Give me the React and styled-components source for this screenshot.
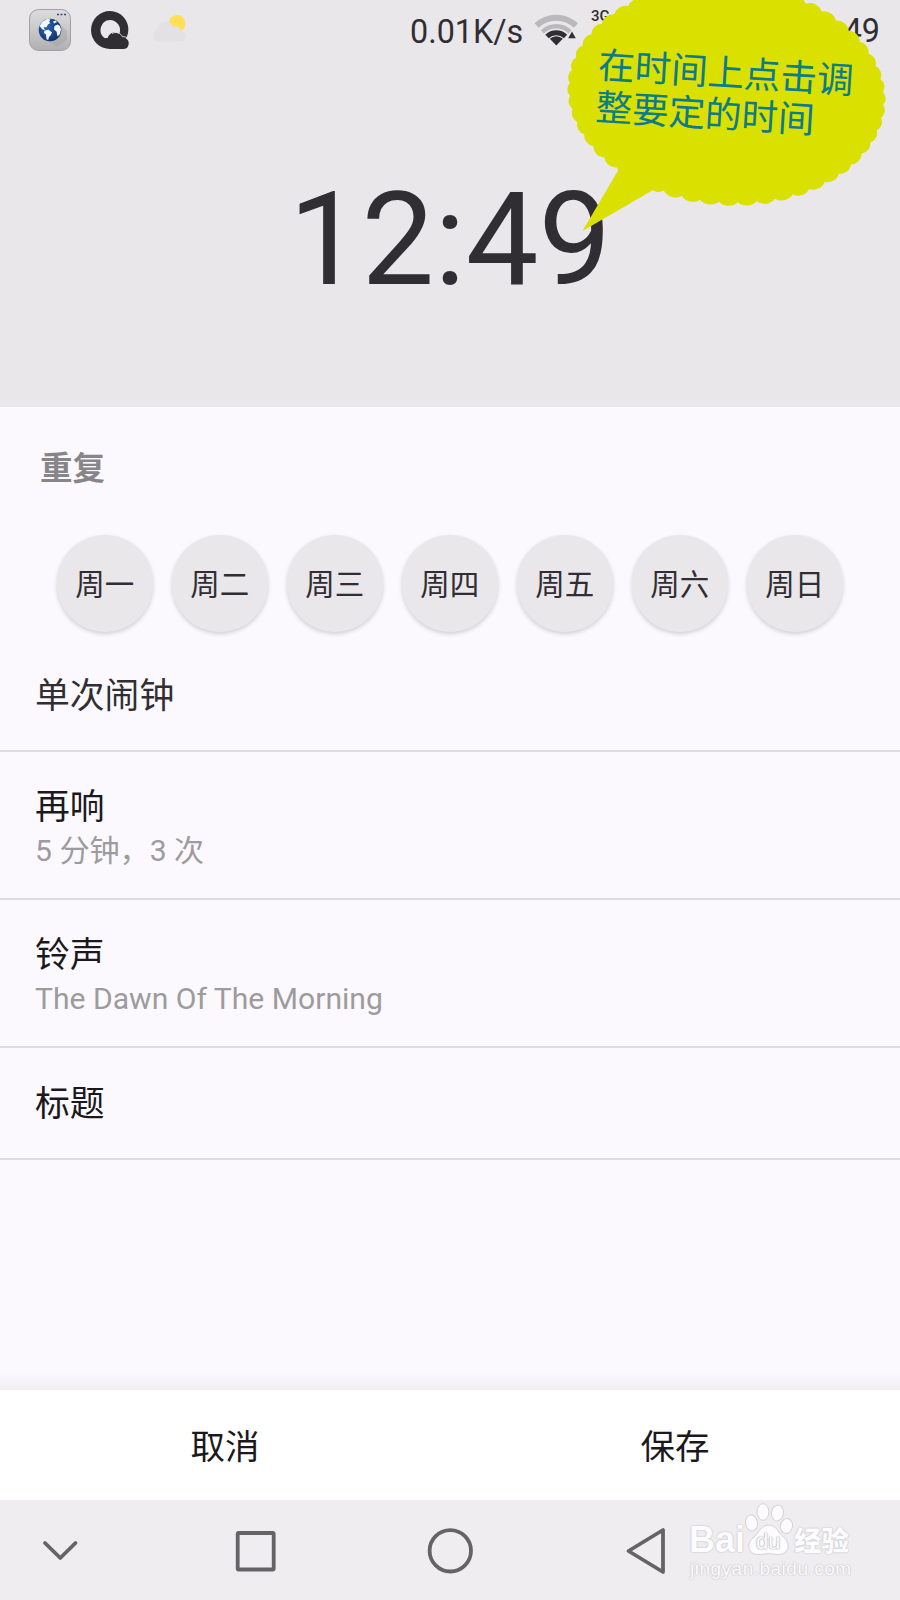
import React from 'react';
import styled, { createGlobalStyle } from 'styled-components';

const days = ['周一', '周二', '周三', '周四', '周五', '周六', '周日'];

// outline of the scalloped bubble: one small arc per step round a tilted ellipse
const scallops = (cx, cy, rx, ry, tilt, count) => {
    const points = [];
    for (let i = 0; i < count; i++) {
        const a = (i / count) * Math.PI * 2;
        const x = rx * Math.cos(a);
        const y = ry * Math.sin(a);
        points.push([
            cx + x * Math.cos(tilt) - y * Math.sin(tilt),
            cy + x * Math.sin(tilt) + y * Math.cos(tilt),
        ]);
    }
    let d = `M${points[0][0]} ${points[0][1]}`;
    for (let i = 1; i <= count; i++) {
        const [px, py] = points[i - 1];
        const [x, y] = points[i % count];
        const r = Math.hypot(x - px, y - py) * 0.72;
        d += `A${r} ${r} 0 0 1 ${x} ${y}`;
    }
    return d + 'Z';
};

const BrowserIcon = () => (
    <svg width="42" height="42" viewBox="0 0 42 42">
        <defs>
            <linearGradient id="metal" x1="0" y1="0" x2="0" y2="1">
                <stop offset="0" stopColor="#dcdcdd" />
                <stop offset="0.5" stopColor="#c9c9ca" />
                <stop offset="1" stopColor="#b0b0b2" />
            </linearGradient>
            <radialGradient id="ocean" cx="0.35" cy="0.4" r="0.7">
                <stop offset="0" stopColor="#2c68b4" />
                <stop offset="1" stopColor="#0d2b66" />
            </radialGradient>
        </defs>
        <rect x="0.5" y="0.5" width="41" height="41" rx="9" fill="url(#metal)" stroke="#a09fa3" />
        <path d="M29 13L38 22V31L28 38L13 29Z" fill="#98989b" opacity="0.35" />
        <path d="M28 5.5h2M31.5 5.5h2M35 5.5h2" stroke="#254b83" strokeWidth="1.6" />
        <circle cx="21" cy="21" r="11.3" fill="url(#ocean)" />
        <path d="M10.5 17l3-4.5 5-2.8 3 .8-1.5 2.5 1.5 1-2.5 1.5-1.5 2.5-3 .5 1.5 2.5-2.5-.5z" fill="#f4f7fb" />
        <path d="M15.5 21.5l4-.8 3.5 2.8-1.5 3-1.5 1.5-.8 3-1.7-.8-.5-4.7-2-1.5z" fill="#f4f7fb" />
        <path d="M25.5 17l3-1.5 2.5 1.5 1 3.5-1 4.5-2.5 2.5-1-5-2.5-2zM24 12.5l2.5-1 1.5 1.5-3 1.5z" fill="#f4f7fb" />
    </svg>
);

const QIcon = () => (
    <svg width="38" height="38" viewBox="0 0 38 38">
        <path
            fillRule="evenodd"
            d="M19 0a18.5 18.5 0 0 1 16 27.5C37.3 29 38 31 37.6 33.5c-.4 3-2.6 4.5-5.4 4.5H19A19 19 0 0 1 19 0zM19 9a10 10 0 0 0-5 18.3c1-.5 1.8-.5 2.7-.3C18 21.5 24 20 28.3 22.8A10 10 0 0 0 19 9z"
            fill="#302e32"
        />
        <path d="M21 22.5c3.5-2 8.5-1 10.5 3.3 1.5-.3 3 0 4.3 1" fill="none" stroke="#e9e7ea" strokeWidth="0.9" />
    </svg>
);

const WeatherIcon = () => (
    <svg width="35" height="29" viewBox="0 0 35 29">
        <circle cx="25" cy="9.5" r="8.5" fill="#ffdf57" />
        <path d="M6.5 27.5a6.5 6.5 0 0 1-1-12.5C6 10 9.5 7.5 13.5 7.5c4 0 6.5 2 7.7 5.5 5-1.5 7 1 8 4C35 17.5 34.5 27.5 28.5 27.5z" fill="#e3e1e4" />
    </svg>
);

const WifiIcon = () => (
    <svg width="46" height="34" viewBox="0 0 46 34">
        <g fill="none">
            <path d="M2.6 12.5a28.5 28.5 0 0 1 39.3 0" stroke="#bab8bb" strokeWidth="6" />
            <path d="M8.4 18.8a20 20 0 0 1 27.6 0" stroke="#bab8bb" strokeWidth="4.5" />
            <path d="M13 23.5a13.5 13.5 0 0 1 18.5 0" stroke="#302e32" strokeWidth="5" />
        </g>
        <path d="M22.3 32.5l-6.5-6.7a9.5 9.5 0 0 1 13 0z" fill="#302e32" />
        <path d="M38 18.5l3.8 6.7h-7.6z" fill="#302e32" />
    </svg>
);

const Bubble = () => (
    <BubbleWrapper>
        <svg width="340" height="240" viewBox="560 0 340 240">
            <path d={scallops(726.5, 94, 157, 108, 0.07, 52)} fill="#dae000" />
            <path d="M619 169L582.5 231L653 190L660 150Z" fill="#dae000" />
        </svg>
        <BubbleText>
            在时间上点击调
            <br />
            整要定的时间
        </BubbleText>
    </BubbleWrapper>
);

const Watermark = () => (
    <WatermarkWrapper>
        <Brand>
            <Bai>Bai</Bai>
            <Paw>
                <svg width="50" height="54" viewBox="0 0 50 54">
                    <g fill="#fcfbfd" stroke="#d4d2d5" strokeWidth="1">
                        <ellipse cx="7.5" cy="20" rx="6" ry="8" transform="rotate(-8 7.5 20)" />
                        <ellipse cx="19" cy="9" rx="6" ry="8.3" />
                        <ellipse cx="33.5" cy="10" rx="6" ry="8" transform="rotate(10 33.5 10)" />
                        <ellipse cx="42.5" cy="23" rx="6" ry="7.5" transform="rotate(12 42.5 23)" />
                        <path d="M24.5 22c8 0 9 7 15 12 8 7 5 17-4 17.5-5 .3-7-.8-11-.8s-6 1.100-11 .8C4 51 2 41 9 35c6-5 8-13 15.500-13z" />
                    </g>
                </svg>
                <Du>du</Du>
            </Paw>
            <BrandCn>经验</BrandCn>
        </Brand>
        <Site>jingyan.baidu.com</Site>
    </WatermarkWrapper>
);

const App = () => (
    <Screen>
        <GlobalStyle />
        <Header>
            <StatusBar>
                <BrowserIcon />
                <QIcon />
                <WeatherIcon />
                <Speed>0.01K/s</Speed>
                <WifiIcon />
                <Network>3G</Network>
                <Clock>12:49</Clock>
            </StatusBar>
            <Time>12:49</Time>
            <Bubble />
        </Header>
        <Content>
            <Repeat>
                <SectionTitle>重复</SectionTitle>
                <Days>
                    {days.map((day) => (
                        <Day key={day}>{day}</Day>
                    ))}
                </Days>
                <Label $soft>单次闹钟</Label>
            </Repeat>
            <Row $height={148} $offset={5}>
                <Label>再响</Label>
                <Value>5 分钟，3 次</Value>
            </Row>
            <Row $height={148} $offset={5}>
                <Label>铃声</Label>
                <Value>The Dawn Of The Morning</Value>
            </Row>
            <Row $height={112} $offset={2}>
                <Label>标题</Label>
            </Row>
        </Content>
        <Actions>
            <Action>取消</Action>
            <Action>保存</Action>
        </Actions>
        <NavBar>
            <svg width="900" height="100" viewBox="0 0 900 100" fill="none" stroke="#656366" strokeWidth="3.8" strokeLinejoin="round" strokeLinecap="round">
                <path d="M45 43l15.3 15L75.5 43" />
                <rect x="237.7" y="33" width="36" height="36.5" rx="1" />
                <circle cx="450.3" cy="50.8" r="20.7" />
                <path d="M663 30v42L628.5 51z" />
            </svg>
            <Watermark />
        </NavBar>
    </Screen>
);

const GlobalStyle = createGlobalStyle`
    body {
        margin: 0;
        background: #fbf9fd;
    }

    * {
        box-sizing: border-box;
    }`;

const Screen = styled.div`
    width: 900px;
    height: 1600px;
    display: flex;
    flex-direction: column;
    overflow: hidden;
    background: #fbf9fd;
    color: #1b191c;
    font-family: Roboto, 'Noto Sans CJK SC', sans-serif;
`;

const Header = styled.header`
    position: relative;
    height: 407px;
    flex: none;
    background: #e9e7ea;
`;

const StatusBar = styled.div`
    display: flex;
    align-items: center;
    height: 60px;
    padding: 0 20px 0 29px;

    svg {
        flex: none;
    }

    svg + svg {
        margin-left: 20px;
    }

    svg:nth-of-type(3) {
        margin: 0 0 4px 23px;
    }

    svg:nth-of-type(4) {
        margin-left: 11px;
    }
`;

const Speed = styled.span`
    width: 113px;
    margin: 3px 0 0 223px;
    font-size: 32.3px;
    line-height: 38px;
    color: #302e32;
`;

const Network = styled.span`
    margin: 0 0 29px 11px;
    font-size: 15px;
    font-weight: 500;
    line-height: 18px;
    color: #302e32;
`;

const Clock = styled(Speed)`
    width: auto;
    margin: 2px 0 0 auto;
`;

const Time = styled.div`
    margin-top: 104px;
    text-align: center;
    font-size: 129.5px;
    line-height: 152px;
    color: #302e32;
`;

const BubbleWrapper = styled.div`
    position: absolute;
    top: 0;
    left: 560px;
    width: 340px;
    height: 240px;
`;

const BubbleText = styled.div`
    position: absolute;
    top: 50px;
    left: 37px;
    width: 262px;
    transform: rotate(3.5deg);
    white-space: nowrap;
    font-size: 36.5px;
    line-height: 42px;
    font-family: 'Noto Sans CJK SC', sans-serif;
    color: #0c7c88;
`;

const Content = styled.main`
    flex: 1;
    display: flex;
    flex-direction: column;
`;

const Repeat = styled.section`
    height: 345px;
    padding: 43px 35px 0;
    border-bottom: 2px solid #dddbde;
`;

const SectionTitle = styled.h2`
    margin: 0 0 0 5px;
    font-size: 32.5px;
    font-weight: 700;
    line-height: 38px;
    color: #878588;
`;

const Days = styled.div`
    display: flex;
    gap: 18.5px;
    margin: 47px 0 41.5px 21.5px;
`;

const Day = styled.button`
    flex: none;
    width: 96.5px;
    height: 96.5px;
    padding: 0 0 3px;
    border: 0;
    border-radius: 50%;
    background: #e9e7ea;
    box-shadow: 0 2px 4px rgba(0, 0, 0, 0.17);
    color: #302e32;
    font: inherit;
    font-size: 29.5px;
`;

const Row = styled.section`
    display: flex;
    flex-direction: column;
    justify-content: center;
    height: ${({ $height }) => $height}px;
    padding: ${({ $offset }) => $offset}px 35px 0;
    border-bottom: 2px solid #dddbde;
`;

const Label = styled.div`
    font-size: 34.8px;
    line-height: 46px;
    color: ${({ $soft }) => ($soft ? '#302e32' : '#1b191c')};
`;

const Value = styled.div`
    font-size: 30.1px;
    line-height: 42px;
    color: #9d9b9e;
`;

const Actions = styled.div`
    position: relative;
    display: flex;
    flex: none;
    height: 110px;
    background: #fff;

    &::before {
        content: '';
        position: absolute;
        left: 0;
        right: 0;
        bottom: 100%;
        height: 18px;
        background: linear-gradient(#fbf9fd, #f0eef1);
    }
`;

const Action = styled.button`
    flex: 1;
    padding: 0 0 3px;
    border: 0;
    background: none;
    color: #1b191c;
    font: inherit;
    font-size: 34.5px;
`;

const NavBar = styled.nav`
    position: relative;
    flex: none;
    height: 100px;
    background: #efedf0;
`;

const WatermarkWrapper = styled.div`
    position: absolute;
    left: 689px;
    top: 3px;
    color: #fcfbfd;
    text-shadow: 0 0 1px #bbb9bc, 0 0 2px #c8c6c9;
`;

const Brand = styled.div`
    display: flex;
    align-items: flex-end;
    height: 54px;
    font: 700 36px/34px 'Liberation Sans', Arial, sans-serif;
`;

const Bai = styled.span`
    width: 55px;
`;

const Paw = styled.div`
    position: relative;
    width: 50px;
    height: 54px;
`;

const Du = styled.span`
    position: absolute;
    left: 12px;
    top: 26px;
    font-size: 22px;
    font-weight: 400;
    line-height: 26px;
    text-shadow: 0 0 1px #a3a1a4, 0 0 2px #aaa8ab;
`;

const BrandCn = styled.span`
    font: 900 27.5px/35px 'Noto Sans CJK SC', sans-serif;
`;

const Site = styled.div`
    padding: 2px 0 0 1px;
    font: 400 19px/20px 'Liberation Sans', Arial, sans-serif;
    letter-spacing: 0.5px;
`;

export default App;
